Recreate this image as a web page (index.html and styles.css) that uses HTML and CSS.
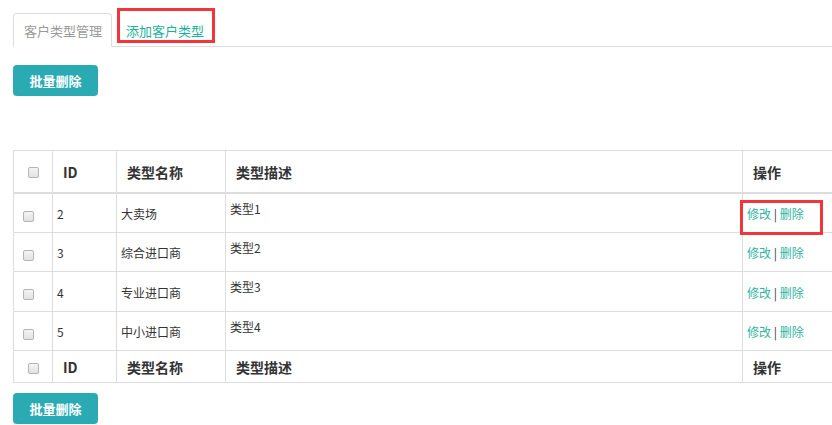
FILE: index.html
```html
<!DOCTYPE html>
<html lang="zh-CN">
<head>
    <meta charset="UTF-8">
    <title>客户类型管理</title>
    <link rel="stylesheet" href="styles.css">
</head>
<body>
    <div class="page">
        <div class="tabs">
            <span class="tab active">客户类型管理</span>
            <span class="tab">添加客户类型<span class="mark mark-tab"></span></span>
        </div>

        <div class="toolbar">
            <button class="btn">批量删除</button>
        </div>

        <table class="grid">
            <thead>
                <tr>
                    <th class="col-check"><input type="checkbox"></th>
                    <th class="col-id">ID</th>
                    <th class="col-name">类型名称</th>
                    <th class="col-desc">类型描述</th>
                    <th class="col-op">操作</th>
                </tr>
            </thead>
            <tbody>
                <tr>
                    <td class="col-check"><input type="checkbox"></td>
                    <td>2</td>
                    <td>大卖场</td>
                    <td class="desc">类型1</td>
                    <td class="ops"><a href="#">修改</a> | <a href="#">删除</a><span class="mark mark-op"></span></td>
                </tr>
                <tr>
                    <td class="col-check"><input type="checkbox"></td>
                    <td>3</td>
                    <td>综合进口商</td>
                    <td class="desc">类型2</td>
                    <td class="ops"><a href="#">修改</a> | <a href="#">删除</a></td>
                </tr>
                <tr>
                    <td class="col-check"><input type="checkbox"></td>
                    <td>4</td>
                    <td>专业进口商</td>
                    <td class="desc">类型3</td>
                    <td class="ops"><a href="#">修改</a> | <a href="#">删除</a></td>
                </tr>
                <tr>
                    <td class="col-check"><input type="checkbox"></td>
                    <td>5</td>
                    <td>中小进口商</td>
                    <td class="desc">类型4</td>
                    <td class="ops"><a href="#">修改</a> | <a href="#">删除</a></td>
                </tr>
            </tbody>
            <tfoot>
                <tr>
                    <th class="col-check"><input type="checkbox"></th>
                    <th>ID</th>
                    <th>类型名称</th>
                    <th>类型描述</th>
                    <th>操作</th>
                </tr>
            </tfoot>
        </table>

        <div class="toolbar bottom">
            <button class="btn">批量删除</button>
        </div>
    </div>
</body>
</html>
```

FILE: styles.css
```css
html, body {
    margin: 0;
    padding: 0;
    overflow: hidden;
    background: #fff;
}
body {
    font-family: "Noto Sans CJK SC", "Liberation Sans", sans-serif;
    font-size: 12px;
    line-height: 17px;
    color: #333;
}
.page {
    padding: 13px 0 0 13px;
    width: 900px;
}

/* tabs */
.tabs {
    display: flex;
    height: 33px;
    border-bottom: 1px solid #ddd;
}
.tab {
    position: relative;
    display: flex;
    align-items: center;
    padding: 0 10px 0 13px;
    margin-bottom: -1px;
    font-size: 13px;
    white-space: nowrap;
    color: #1ab39a;
    border: 1px solid transparent;
    border-radius: 4px 4px 0 0;
}
.tab.active {
    padding: 0 9px 0 10px;
    color: #999;
    background: #fff;
    border-color: #ddd;
    border-bottom-color: #fff;
}

/* annotation boxes */
.mark {
    position: absolute;
    border: 3px solid #f2353a;
    pointer-events: none;
}
.mark-tab {
    left: 4px;
    top: -6px;
    width: 92px;
    height: 29px;
}
.mark-op {
    left: -3px;
    top: 6px;
    width: 77px;
    height: 29px;
}

/* buttons */
.toolbar {
    padding-top: 18px;
}
.toolbar.bottom {
    padding-top: 10px;
}
.btn {
    display: block;
    width: 85px;
    height: 31px;
    border: 0;
    border-radius: 4px;
    background: #2aabb3;
    color: #fff;
    font-family: inherit;
    font-size: 13px;
    font-weight: bold;
    padding: 0;
}

/* table */
.grid {
    margin-top: 54px;
    border-collapse: collapse;
    width: 900px;
    table-layout: fixed;
}
.grid th,
.grid td {
    border: 1px solid #ddd;
    text-align: left;
    vertical-align: middle;
}
.grid th {
    font-size: 14px;
    font-weight: bold;
    color: #333;
    padding: 2px 10px 0;
}
.grid thead tr {
    height: 42px;
}
.grid thead th {
    border-bottom: 2px solid #ddd;
}
.grid tfoot tr {
    height: 32px;
}
.grid tbody tr {
    height: 39.5px;
}
.grid td {
    padding: 2px 5px 0 4px;
    color: #333;
}
.grid td.desc {
    vertical-align: top;
    padding: 6px 5px 0 4px;
}
.grid .col-check {
    width: 38px;
    padding: 0;
    text-align: center;
}
.grid td.col-check {
    padding: 3px 0 0 9px;
    text-align: left;
}
.grid .col-id { width: 43px; }
.grid .col-name { width: 88px; }
.grid .col-desc { width: 496px; }

input[type=checkbox] {
    appearance: none;
    width: 11px;
    height: 11px;
    margin: 0;
    vertical-align: middle;
    border: 1px solid #b5b5b5;
    border-radius: 2px;
    background: linear-gradient(#f4f4f4, #e2e2e2);
}

.ops {
    position: relative;
    color: #2a8fb3;
}
.ops a {
    color: #2fb5a0;
    text-decoration: none;
}
```
